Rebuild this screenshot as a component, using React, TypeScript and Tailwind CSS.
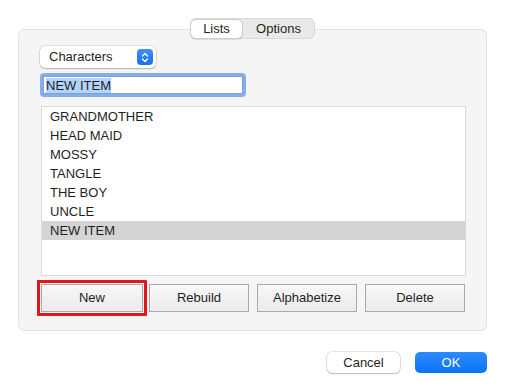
import React from "react";

const font = { fontFamily: '"Liberation Sans", Arial, sans-serif' };

export default function App() {
  const items = ["GRANDMOTHER", "HEAD MAID", "MOSSY", "TANGLE", "THE BOY", "UNCLE", "NEW ITEM"];
  return (
    <div className="w-[505px] h-[391px] bg-white pt-[29px] pl-[18px] text-[13px] text-[#1f1f1f] overflow-hidden" style={font}>
      <div className="w-[469px] h-[302px] rounded-[6px] border border-[#e3e3e3] bg-[#f5f5f5] flex flex-col">
        {/* tabs */}
        <div className="-mt-[12px] flex justify-center">
          <div className="flex h-[21px] w-[125px] rounded-[6px] border border-[#d9d9d9] bg-[#e9e9e9]">
            <div className="w-[53px] h-[20px] -ml-px rounded-[6px] bg-white border border-[#cfcfcf] shadow-[0_1px_1px_rgba(0,0,0,0.12)] flex items-center justify-center">Lists</div>
            <div className="flex-1 flex items-center justify-center">Options</div>
          </div>
        </div>
        <div className="pl-[21px] flex flex-col">
          {/* popup */}
          <div className="mt-[7px] w-[116px] h-[22px] rounded-[5px] bg-white shadow-[0_0_0_0.5px_rgba(0,0,0,0.18),0_1px_1.5px_rgba(0,0,0,0.2)] flex items-center pl-[9px] pr-[3px]">
            <span className="flex-1">Characters</span>
            <div className="w-[16px] h-[16px] rounded-[4px] bg-gradient-to-b from-[#3f8ff5] to-[#1a6fe6] flex items-center justify-center">
              <svg width="8" height="11" viewBox="0 0 8 11" fill="none" stroke="white" strokeWidth="1.4" strokeLinecap="round" strokeLinejoin="round">
                <path d="M1.5 4L4 1.5L6.5 4" />
                <path d="M1.5 7L4 9.5L6.5 7" />
              </svg>
            </div>
          </div>
          {/* text field */}
          <div className="mt-[5px] w-[206px] h-[24px] rounded-[4px] bg-[#86aeea] p-[3px]">
            <div className="w-full h-full bg-white border border-[#7f9fd0] flex items-center pl-[2px]">
              <span className="bg-[#b3d4fc] leading-[15px]">NEW ITEM</span>
            </div>
          </div>
          {/* list */}
          <div className="mt-[9px] ml-px w-[425px] h-[170px] bg-white border border-[#dadada]">
            {items.map((it, i) => (
              <div key={it} className={`h-[19px] flex items-center pl-[8px] ${i === items.length - 1 ? "bg-[#d5d5d5]" : ""}`}>
                {it}
              </div>
            ))}
          </div>
          {/* buttons */}
          <div className="mt-[8px] ml-px flex items-center">
            <div className="relative">
              <div className="absolute -left-[4px] -top-[4px] w-[110px] h-[36px] border-[3px] border-[#e2141c] rounded-[1px]" />
              <button className="w-[102px] h-[28px] border border-[#a9a9a9] bg-gradient-to-b from-[#f7f7f7] to-[#ebebeb] flex items-center justify-center" style={font}>New</button>
            </div>
            <button className="ml-[6px] w-[100px] h-[28px] border border-[#a9a9a9] bg-gradient-to-b from-[#f7f7f7] to-[#ebebeb] flex items-center justify-center" style={font}>Rebuild</button>
            <button className="ml-[8px] w-[100px] h-[28px] border border-[#a9a9a9] bg-gradient-to-b from-[#f7f7f7] to-[#ebebeb] flex items-center justify-center" style={font}>Alphabetize</button>
            <button className="ml-[8px] w-[100px] h-[28px] border border-[#a9a9a9] bg-gradient-to-b from-[#f7f7f7] to-[#ebebeb] flex items-center justify-center" style={font}>Delete</button>
          </div>
        </div>
      </div>
      {/* bottom buttons */}
      <div className="mt-[21px] flex justify-end w-[469px]">
        <button className="w-[73px] h-[21px] rounded-[5px] bg-white shadow-[0_0_0_0.5px_rgba(0,0,0,0.2),0_1px_1.5px_rgba(0,0,0,0.2)] flex items-center justify-center" style={font}>Cancel</button>
        <button className="ml-[15px] w-[72px] h-[21px] rounded-[5px] bg-gradient-to-b from-[#2a8bfb] to-[#0a74f5] text-white font-medium flex items-center justify-center" style={font}>OK</button>
      </div>
    </div>
  );
}
